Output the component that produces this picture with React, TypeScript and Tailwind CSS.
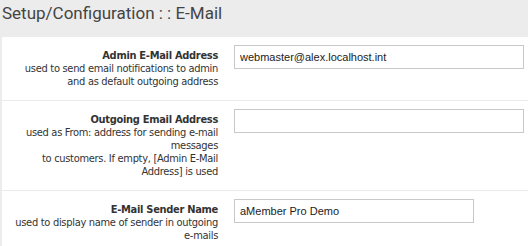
import React from 'react';

interface FieldRow {
  label: string;
  help: string[];
  value: string;
  inputWidth: string;
}

const rows: FieldRow[] = [
  {
    label: 'Admin E-Mail Address',
    help: ['used to send email notifications to admin', 'and as default outgoing address'],
    value: 'webmaster@alex.localhost.int',
    inputWidth: 'w-[290px]',
  },
  {
    label: 'Outgoing Email Address',
    help: [
      'used as From: address for sending e-mail',
      'messages',
      'to customers. If empty, [Admin E-Mail',
      'Address] is used',
    ],
    value: '',
    inputWidth: 'w-[290px]',
  },
  {
    label: 'E-Mail Sender Name',
    help: ['used to display name of sender in outgoing', 'e-mails'],
    value: 'aMember Pro Demo',
    inputWidth: 'w-[240px]',
  },
];

export default function App() {
  return (
    <div className="h-[246px] w-[528px] overflow-hidden bg-[#ececec]">
      <h1 className="h-[37px] pl-[2px] pt-[1px] font-['Roboto',sans-serif] text-[17px] leading-[24px] text-[#444]">
        Setup/Configuration : : E-Mail
      </h1>

      <div className="ml-[2px] bg-white">
        {rows.map((row, i) => (
          <div key={i} className={`flex ${i > 0 ? 'border-t border-[#ebebeb]' : ''}`}>
            <div className="w-[224px] shrink-0 pr-[8px] py-[12px] text-right font-['DejaVu_Sans_Condensed','DejaVu_Sans',sans-serif] text-[11px] leading-[13px] tracking-[-0.3px] text-[#333]">
              <div className="font-bold whitespace-nowrap">{row.label}</div>
              {row.help.map((line, j) => (
                <div key={j} className="whitespace-nowrap">{line}</div>
              ))}
            </div>
            <div className="pl-[8px] pt-[6px]">
              <input
                type="text"
                readOnly
                value={row.value}
                className={`${row.inputWidth} h-[24px] border border-[#c8c8c8] bg-white px-[5px] font-['Liberation_Sans',Arial,sans-serif] text-[11px] text-[#222] outline-none`}
              />
            </div>
          </div>
        ))}
      </div>
    </div>
  );
}
